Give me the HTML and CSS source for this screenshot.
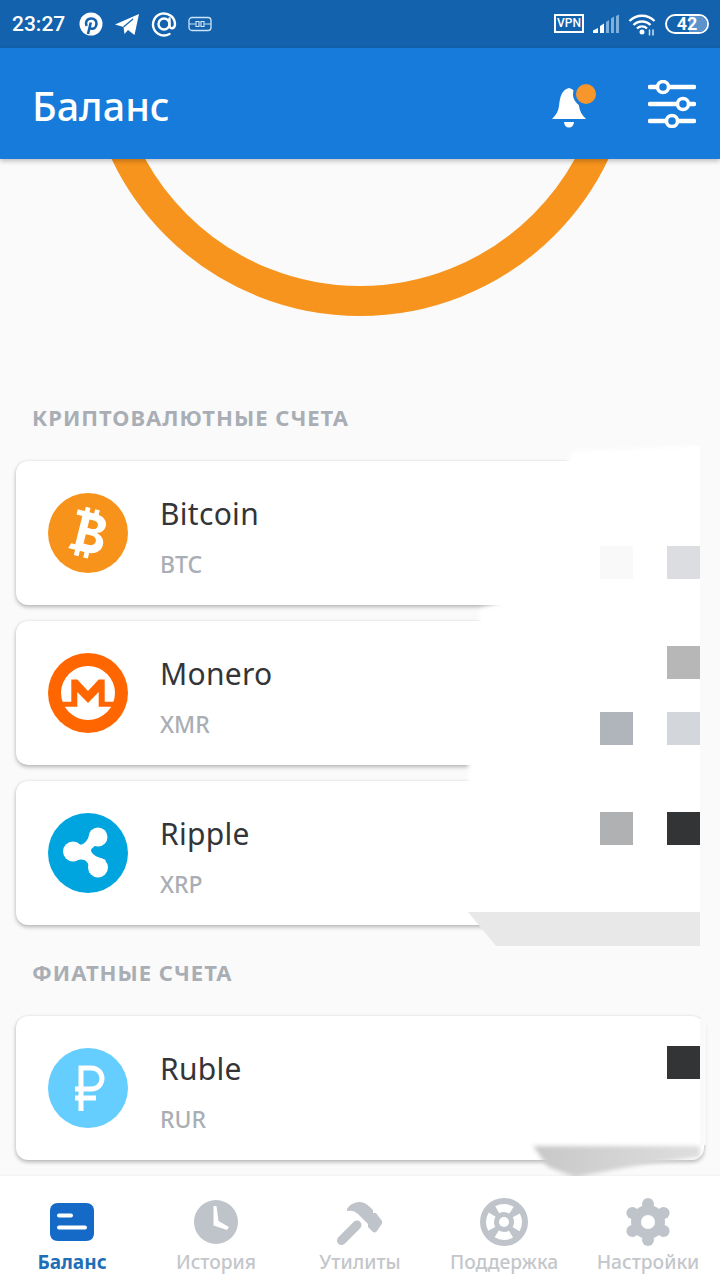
FILE: index.html
```html
<!DOCTYPE html>
<html lang="ru">
<head>
    <meta charset="UTF-8">
    <meta name="viewport" content="width=device-width, initial-scale=1.0">
    <title>Баланс</title>
    <link rel="stylesheet" href="styles.css">
</head>
<body>
    <div class="phone">
        <div class="status-bar">
            <div class="status-left">
                <span class="clock">23:27</span>
                <svg width="24" height="24" viewBox="0 0 24 24"><circle cx="12" cy="12" r="11.500" fill="#fff"/><path d="M9 22 11.800 10.500M7.600 14c-1.800-3.600.4-7.500 4.600-7.500 3.600 0 5.600 2.500 5.300 5.300-.3 3.100-2.300 5.200-4.600 5-1.300-.1-2-.8-2.400-1.700" fill="none" stroke="#1262ae" stroke-width="2.600"/></svg>
                <svg width="26" height="24" viewBox="0 0 26 24"><path d="M25 2 20.500 23 14 18 10.500 22 9.500 15 1 12.500Z" fill="#fff"/><path d="M9.500 15 19 7" stroke="#1262ae" stroke-width="1.200"/></svg>
                <svg width="26" height="26" viewBox="0 0 26 26"><circle cx="13" cy="13" r="5.500" fill="none" stroke="#fff" stroke-width="2.400"/><path d="M18.500 7.500v7c0 4 5.500 4 5.500-1.500A11 11 0 1 0 18.500 23" fill="none" stroke="#fff" stroke-width="2.400" stroke-linecap="round"/></svg>
                <svg width="24" height="16" viewBox="0 0 24 16"><rect x="1" y="1.500" width="22" height="13" rx="3" fill="none" stroke="#cfe3f5" stroke-width="1.300"/><path d="M1 8h6M17 8h6M8 5.500h3v5H8ZM13 5.500h3v5h-3Z" fill="none" stroke="#cfe3f5" stroke-width="1.200"/></svg>
            </div>
            <div class="status-right">
                <span class="vpn">VPN</span>
                <svg width="28" height="20" viewBox="0 0 28 20"><path d="M1 19v-2.500L6 14v5ZM8 19v-7l4-2.500V19Z" fill="#fff"/><path d="M14 19V8l3-2v13ZM19 19V4.500l3-2V19ZM24 19V2l3-1.500V19Z" fill="#7fb0dc"/></svg>
                <svg width="28" height="24" viewBox="0 0 28 24"><path d="M1.500 9a17.500 17.500 0 0 1 25 0M5.500 13a12 12 0 0 1 17 0M9 16.500a7 7 0 0 1 10 0" fill="none" stroke="#fff" stroke-width="2.400"/><circle cx="14" cy="20" r="2.500" fill="#fff"/><path d="M21.500 17.500v6M25 17.500v6" stroke="#cfe3f5" stroke-width="1.500"/></svg>
                <span class="battery"><span class="battery-level"></span><span class="battery-num">42</span></span>
            </div>
        </div>

        <header class="app-bar">
            <h1 class="app-title">Баланс</h1>
            <div class="app-actions">
                <svg width="44" height="50" viewBox="0 0 44 50"><path d="M17 9C9 11 8 19 7 27 6.500 32 4 36 0 40H34C30 36 27.500 32 27 27 26 19 25 11 17 9Z" fill="#fff"/><path d="M12 43h10a5 5.500 0 0 1-10 0Z" fill="#fff"/><circle cx="34" cy="15" r="13" fill="#167bdb"/><circle cx="34" cy="15" r="10" fill="#f7962b"/></svg>
                <svg width="48" height="48" viewBox="0 0 48 48"><path d="M2 7h44M2 24h44M2 41h44" fill="none" stroke="#fff" stroke-width="4.500" stroke-linecap="round"/><g fill="#167bdb" stroke="#fff" stroke-width="3.500"><circle cx="15" cy="7" r="5.500"/><circle cx="35" cy="24" r="5.500"/><circle cx="24" cy="41" r="5.500"/></g></svg>
            </div>
        </header>

        <main class="content">
            <svg class="ring" width="720" height="157" viewBox="0 160 720 157"><circle cx="360" cy="42" r="260" fill="none" stroke="#f7941d" stroke-width="30"/></svg>

            <h2 class="section-title first">КРИПТОВАЛЮТНЫЕ СЧЕТА</h2>
            <div class="card">
                <svg class="coin" width="80" height="80" viewBox="0 0 80 80"><circle cx="40" cy="40" r="40" fill="#f7931a"/><g transform="rotate(14 40 40) translate(40 40) scale(1.200 1.080) translate(-41 -40)"><path d="M28 21h15c7 0 11 3.500 11 9 0 4-2.500 7-6 8 4.500 1 7.500 4.500 7.500 9.500 0 6.500-5 10.500-12 10.500H28l1.500-5h3.500V26h-5Z" fill="#fff"/><path d="M34 17h4v6h-4ZM42 17h4v6h-4ZM34 56h4v7h-4ZM42 56h4v7h-4Z" fill="#fff"/><path d="M39.500 27.500h3c3.500 0 5 1.500 5 4s-1.500 4-5 4h-3ZM39.500 41.500h4c4 0 5.500 1.800 5.500 4.500s-1.500 4.500-5.500 4.500h-4Z" fill="#f7931a"/></g></svg>
                <div class="account">
                    <div class="account-name">Bitcoin</div>
                    <div class="account-code">BTC</div>
                </div>
            </div>
            <div class="card">
                <svg class="coin" width="80" height="80" viewBox="0 0 80 80"><circle cx="40" cy="40" r="40" fill="#ff6600"/><circle cx="40" cy="40" r="27" fill="#fff"/><path d="M8 48.700H23.300V26.500H29.300L40 38 50.700 26.500H56.700V48.700H72V53.700H50.700V39L40 50 29.300 39V53.700H8Z" fill="#ff6600"/></svg>
                <div class="account">
                    <div class="account-name">Monero</div>
                    <div class="account-code">XMR</div>
                </div>
            </div>
            <div class="card">
                <svg class="coin" width="80" height="80" viewBox="0 0 80 80"><circle cx="40" cy="40" r="40" fill="#00a5df"/><g fill="#fff"><circle cx="25" cy="38.500" r="10"/><circle cx="50" cy="24" r="9.500"/><circle cx="50" cy="54.500" r="10"/><path d="M25 29Q36 38 43 19L58 28Q43 33 43 38 44 43 58 47L41 60Q43 42 25 48Z"/></g></svg>
                <div class="account">
                    <div class="account-name">Ripple</div>
                    <div class="account-code">XRP</div>
                </div>
            </div>

            <h2 class="section-title">ФИАТНЫЕ СЧЕТА</h2>
            <div class="card">
                <svg class="coin" width="80" height="80" viewBox="0 0 80 80"><circle cx="40" cy="40" r="40" fill="#66cdff"/><path d="M33 63V20h10.500a10.500 10.500 0 0 1 0 21H27M27 50h21" fill="none" stroke="#fff" stroke-width="5"/></svg>
                <div class="account">
                    <div class="account-name">Ruble</div>
                    <div class="account-code">RUR</div>
                </div>
            </div>

            <!-- censored values in the source picture, painted over the cards -->
            <svg class="redact" width="720" height="1020" viewBox="0 160 720 1020">
                <defs>
                    <filter id="soft" x="-10%" y="-10%" width="120%" height="120%"><feGaussianBlur stdDeviation="2"/></filter>
                    <linearGradient id="smear" x1="0" y1="0" x2="1" y2="0"><stop offset="0" stop-color="#c8c8c8"/><stop offset="1" stop-color="#dedede"/></linearGradient>
                </defs>
                <path d="M572 452 700 447V905H468V770L480 610 510 600Z" fill="#fff" filter="url(#soft)"/>
                <rect x="690" y="447" width="10" height="470" fill="#fff"/>
                <rect x="700" y="447" width="20" height="500" fill="#fafafa"/>
                <rect x="700" y="1020" width="6" height="126" fill="#fafafa"/>
                <path d="M468 913H700V947H496Z" fill="#e8e8e8"/>
                <path d="M533 1147H700V1158L640 1166 575 1178 548 1168Z" fill="url(#smear)" filter="url(#soft)"/>
                <rect x="600" y="547" width="33" height="33" fill="#f9f9fa"/>
                <rect x="667" y="547" width="33" height="33" fill="#dcdde0"/>
                <rect x="667" y="647" width="33" height="33" fill="#b7b7b7"/>
                <rect x="600" y="713" width="33" height="33" fill="#b0b5bc"/>
                <rect x="667" y="713" width="33" height="33" fill="#d3d6da"/>
                <rect x="600" y="813" width="33" height="33" fill="#b0b1b3"/>
                <rect x="667" y="813" width="33" height="33" fill="#333436"/>
                <rect x="667" y="1047" width="33" height="33" fill="#333436"/>
            </svg>
        </main>

        <nav class="tab-bar">
            <div class="tab active">
                <svg width="44" height="48" viewBox="0 0 44 48"><path d="M8 5h28c5 0 8 3 8 8v22c0 5-3 8-8 8H8c-5 0-8-3-8-8V13c0-5 3-8 8-8Z" fill="#1569c7"/><path d="M9 17.500h12M9 29.500h26" stroke="#fff" stroke-width="4" stroke-linecap="round"/></svg>
                <span>Баланс</span>
            </div>
            <div class="tab">
                <svg width="44" height="48" viewBox="0 0 44 48"><circle cx="22" cy="24" r="22" fill="#bfc4ca"/><path d="M19.500 8h3l2 15 10.500 6-2 3-13.500-4.500Z" fill="#fff"/></svg>
                <span>История</span>
            </div>
            <div class="tab">
                <svg width="48" height="48" viewBox="0 0 48 48"><path d="M5.500 42.500 21 27" stroke="#bfc4ca" stroke-width="9" stroke-linecap="round"/><path d="M11 11C14 6 19 4 24 4 29 4 33 8 37 12L37 15 40 15 46 23C46.500 25 46 26 45 27L41 33C40 34.500 38 35 36.500 33.500L32 29 32 26 22 16C19 13 15 12 11 13Z" fill="#bfc4ca"/></svg>
                <span>Утилиты</span>
            </div>
            <div class="tab">
                <svg width="48" height="48" viewBox="0 0 48 48"><circle cx="24" cy="24" r="24" fill="#bfc4ca"/><circle cx="24" cy="24" r="5" fill="#fff"/><circle cx="24" cy="24" r="14" fill="none" stroke="#fff" stroke-width="8" stroke-dasharray="15 7" stroke-dashoffset="7.500"/></svg>
                <span>Поддержка</span>
            </div>
            <div class="tab">
                <svg width="44" height="48" viewBox="0 0 44 48"><g fill="#bfc4ca"><circle cx="22" cy="24" r="17"/><circle cx="22" cy="6" r="6"/><circle cx="22" cy="42" r="6"/><circle cx="6.400" cy="15" r="6"/><circle cx="37.600" cy="15" r="6"/><circle cx="6.400" cy="33" r="6"/><circle cx="37.600" cy="33" r="6"/></g><circle cx="22" cy="24" r="7" fill="#fff"/></svg>
                <span>Настройки</span>
            </div>
        </nav>
    </div>
</body>
</html>
```

FILE: styles.css
```css
* {
    box-sizing: border-box;
}
body {
    margin: 0;
    font-family: "Noto Sans", Arial, sans-serif;
    background-color: #fafafa;
}
.phone {
    position: relative;
    width: 720px;
    height: 1280px;
    display: flex;
    flex-direction: column;
    overflow: hidden;
}

/* status bar */
.status-bar {
    height: 48px;
    padding: 0 11px 0 12px;
    display: flex;
    justify-content: space-between;
    align-items: center;
    background-color: #1262ae;
    color: #fff;
}
.status-left, .status-right {
    display: flex;
    align-items: center;
}
.status-left {
    gap: 11px;
}
.status-right {
    gap: 8px;
}
.clock {
    font-family: "Roboto", sans-serif;
    font-size: 21px;
    font-weight: 500;
    margin-right: 3px;
}
.vpn {
    width: 30px;
    height: 19px;
    border: 2px solid #fff;
    font-family: "Roboto", sans-serif;
    font-size: 12px;
    font-weight: 500;
    line-height: 15px;
    text-align: center;
}
.battery {
    position: relative;
    width: 44px;
    height: 20px;
    margin-left: 1px;
    border: 2px solid #fff;
    border-radius: 10px;
    overflow: hidden;
    display: flex;
    align-items: center;
    justify-content: center;
}
.battery-level {
    position: absolute;
    right: 0;
    top: 0;
    width: 18px;
    height: 16px;
    background-color: #5c93cb;
}
.battery-num {
    position: relative;
    font-family: "Roboto", sans-serif;
    font-size: 18px;
    font-weight: 700;
}

/* app bar */
.app-bar {
    position: relative;
    z-index: 2;
    height: 112px;
    padding: 0 24px 0 32px;
    display: flex;
    justify-content: space-between;
    align-items: center;
    background-color: #167bdb;
    box-shadow: 0 2px 5px rgba(0, 0, 0, 0.25);
}
.app-title {
    margin: 5px 0 0;
    color: #fff;
    font-size: 39.500px;
    font-weight: 500;
}
.app-actions {
    display: flex;
    align-items: center;
    gap: 52px;
}

/* accounts */
.content {
    position: relative;
    flex: 1;
    padding: 0 16px;
}
.ring {
    display: block;
    margin: 0 -16px;
}
.section-title {
    margin: 0;
    padding-left: 16px;
    height: 28px;
    color: #a9aeb5;
    font-size: 22px;
    font-weight: 700;
    letter-spacing: 1px;
    line-height: 28px;
}
.section-title.first {
    margin-top: 87px;
    margin-bottom: 30px;
}
.section-title:not(.first) {
    margin-top: 33px;
    margin-bottom: 30px;
}
.card {
    width: 688px;
    height: 144px;
    margin-bottom: 16px;
    padding-left: 32px;
    display: flex;
    align-items: center;
    gap: 32px;
    background-color: #fff;
    border-radius: 12px;
    box-shadow: 0 2px 4px rgba(0, 0, 0, 0.28), 0 0 2px rgba(0, 0, 0, 0.08);
}
.coin {
    flex: none;
}
.account {
    padding-top: 6px;
}
.account-name {
    color: #333538;
    font-size: 30px;
    letter-spacing: 0.3px;
    line-height: 40px;
}
.account-code {
    margin-top: 16px;
    color: #a9aeb5;
    font-size: 23px;
    font-weight: 500;
    line-height: 28px;
}
.redact {
    position: absolute;
    left: 0;
    top: 0;
}

/* bottom tabs */
.tab-bar {
    position: relative;
    z-index: 2;
    height: 104px;
    display: flex;
    background-color: #fff;
    box-shadow: 0 -1px 2px rgba(0, 0, 0, 0.04);
}
.tab {
    flex: 1;
    padding-top: 22px;
    display: flex;
    flex-direction: column;
    align-items: center;
    color: #c3c6ca;
    font-size: 19.200px;
    font-weight: 500;
    line-height: 26px;
    white-space: nowrap;
}
.tab span {
    margin-top: 3px;
}
.tab.active {
    color: #1f6fb8;
    font-weight: 700;
    font-size: 19px;
}
```
